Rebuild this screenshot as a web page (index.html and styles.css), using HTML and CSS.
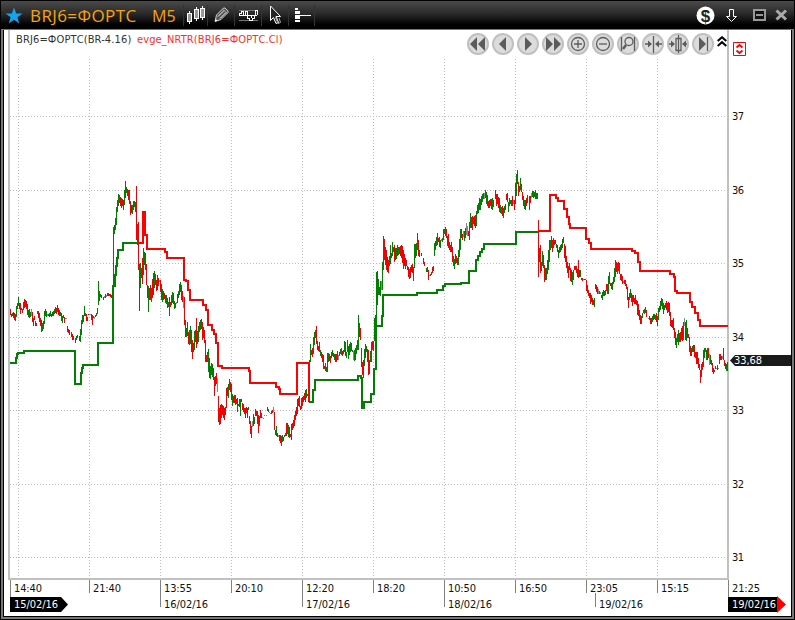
FILE: index.html
```html
<!DOCTYPE html>
<html lang="ru">
<head>
    <meta charset="UTF-8">
    <title>BRJ6=ФОРТС M5</title>
    <link rel="stylesheet" href="styles.css">
</head>
<body>
    <div class="window">
        <div class="titlebar">
            <svg class="star" width="18" height="18" viewBox="0 0 18 18"><path d="M9 0.5L11.2 6.5H17.5L12.4 10.3L14.3 16.5L9 12.8L3.7 16.5L5.6 10.3L0.5 6.5H6.8Z"/></svg>
            <h1 class="symbol">BRJ6=ФОРТС</h1>
            <h1 class="period">M5</h1>
            <div class="tool candles">
                <svg width="18" height="19" viewBox="0 0 18 19" shape-rendering="crispEdges"><path d="M2 5h1v13h-1zM9 1h1v14h-1zM15 0h1v14h-1z" fill="#fff"/><path d="M.5 7.500h4v8h-4zM7.500 3.500h4v9h-4zM13.500 2.500h4v9h-4z" fill="#999" stroke="#fff"/></svg>
            </div>
            <div class="tool pencil">
                <svg width="15" height="16" viewBox="0 0 15 16"><path d="M1 14.500L2.500 8L9.500 1H11L14 4V5.500L7 12.500Z" fill="#555" stroke="#ccc"/><path d="M4 9.500L10.500 3M6 11.500L12.500 5" stroke="#eee"/><path d="M8.500 2L13 6.500" stroke="#999"/><path d="M1 14.500L1.700 12L3.500 13.700Z" fill="#fff"/></svg>
            </div>
            <div class="tool levels">
                <svg width="19" height="13" viewBox="0 0 19 13" shape-rendering="crispEdges"><path d="M0 1.500h19M0 11.500h19" stroke="#777"/><path d="M.5 6V4.500h2V2.500h2V6M6.500 6V2.500h2V6M0 6.500h18M8.500 6.500v3h2v2h3v-2h2v-3M12.500 6v3M16.500 6.500v-5h2v4" stroke="#fff"/></svg>
            </div>
            <div class="tool cursor">
                <svg width="13" height="20" viewBox="0 0 13 20"><path d="M1.500 1V15.500L4.500 12.500L7 18.500L9.500 17.500L7 11.500H11.500Z" fill="#222" stroke="#fff"/><path d="M6.500 12.500L9 18.500L11.500 17.500L10 13" stroke="#aaa"/></svg>
            </div>
            <div class="tool volume">
                <svg width="17" height="16" viewBox="0 0 17 16" shape-rendering="crispEdges"><path d="M0 1h3v2H0zM0 4h5v3H0zM0 8h16v1H0zM0 9h5v3H0zM0 13h5v2H0z" fill="#fff"/></svg>
            </div>
            <div class="window-buttons">
                <svg class="dollar" width="19" height="19" viewBox="0 0 19 19"><circle cx="9.500" cy="9.500" r="9"/><text x="9.500" y="15.500">$</text></svg>
                <svg class="arrow-down" width="11" height="13" viewBox="0 0 11 13"><path d="M3.500.5h4v7h3L5.500 12.500L.5 7.500h3z"/></svg>
                <svg class="max" width="13" height="12" viewBox="0 0 13 12" shape-rendering="crispEdges"><path d="M1 1h11v10H1z"/><path d="M3 6h7"/></svg>
                <svg class="close" width="13" height="12" viewBox="0 0 13 12"><path d="M1.500 1.500L11 10.500M11 1.500L1.500 10.500"/></svg>
            </div>
        </div>
        <div class="content">
            <svg class="chart" width="787" height="586" viewBox="4 30 787 586">
                <g id="grid" class="grid"></g>
                <path class="frame" d="M9 30V579H728V30"/>
                <g id="bars" shape-rendering="crispEdges"></g>
                <g class="trend">
                    <path class="up" d="M10 363H16V358H17V354H18V353H24V351H75V384H81V373H82V368H83V365H98V343H113V286H115V275H116V266H117V258H118V250H123V243H137"/>
                    <path class="down" d="M138 243H143V212H145V235H147V249H165V252H167V258H184V280H186V281H188V290H190V300H203V305H206V310H208V325H212V330H214V334H216V343H218V366H222V368H249V371H250V383H276V387H279V389H280V394H297V363H309V402"/>
                    <path class="up" d="M309 402H313V390H315V380H358V376H361V378H362V408H364V402H371V394H374V369H376V326H382V316H383V295H417V293H437V290H443V286H445V284H461V283H469V271H476V260H478V256H480V252H482V249H484V244H516V232H538"/>
                    <path class="down" d="M538 231H550V195H556V198H558V201H564V209H567V217H569V224H570V228H586V239H589V243H591V249H632V251H635V253H638V262H640V271H670V274H674V277H675V291H677V293H690V302H692V307H695V313H698V320H700V326H728"/>
                </g>
                <g id="axis" class="axis"></g>
                <g class="tags">
                    <path class="tag price" d="M730 360.500L735 355H791V366H735Z"/>
                    <text class="light" x="734" y="364" textLength="28">33,68</text>
                    <path class="tag" d="M10 597H61L68 604.500L61 612H10Z"/>
                    <text class="light" x="14" y="608" textLength="44">15/02/16</text>
                    <path class="tag" d="M728 597H777V612H728Z"/>
                    <path class="arrow" d="M777 596L786 604.500L777 613Z"/>
                    <text class="light" x="732" y="608" textLength="44">19/02/16</text>
                </g>
            </svg>
            <div class="legend">
                <span class="instrument">BRJ6=ФОРТС(BR-4.16)</span>
                <span class="indicator">evge_NRTR(BRJ6=ФОРТС.Cl)</span>
            </div>
            <div class="nav">
                <svg viewBox="0 0 22 22"><circle cx="11" cy="11" r="10"/><path d="M10 4v14L3 11zM18 4v14L11 11z"/></svg>
                <svg viewBox="0 0 22 22"><circle cx="11" cy="11" r="10"/><path d="M14 4v14L7 11z"/></svg>
                <svg viewBox="0 0 22 22"><circle cx="11" cy="11" r="10"/><path d="M8 4v14L15 11z"/></svg>
                <svg viewBox="0 0 22 22"><circle cx="11" cy="11" r="10"/><path d="M4 4v14L11 11zM12 4v14L19 11z"/></svg>
                <svg viewBox="0 0 22 22"><circle cx="11" cy="11" r="10"/><g class="line"><circle cx="11" cy="11" r="6.500"/><path d="M7 11h8M11 7v8"/></g></svg>
                <svg viewBox="0 0 22 22"><circle cx="11" cy="11" r="10"/><g class="line"><circle cx="11" cy="11" r="6.500"/><path d="M7 11h8"/></g></svg>
                <svg viewBox="0 0 22 22"><circle cx="11" cy="11" r="10"/><g class="line"><circle cx="12" cy="8.500" r="4"/><path d="M4.500 4v14M17.500 4v14"/><path class="thick" d="M9 12L6 16"/></g></svg>
                <svg viewBox="0 0 22 22"><circle cx="11" cy="11" r="10"/><path class="line" d="M11.500 3v17M3 11h4M16 11h4"/><path d="M6 7.500v7L10 11zM17 7.500v7L13 11z"/></svg>
                <svg viewBox="0 0 22 22"><circle cx="11" cy="11" r="10"/><path class="line" d="M9 5.500h5v12h-5zM11.500 2v18M2 11h3M17 11h3"/><path d="M4 7.500v7L8 11zM19 7.500v7L15 11z"/></svg>
                <svg viewBox="0 0 22 22"><circle cx="11" cy="11" r="10"/><path d="M7 4v14L14 11z"/><path class="line" d="M15.500 4v14"/></svg>
            </div>
            <svg class="collapse" width="10" height="11" viewBox="0 0 10 11"><path d="M.7 5L5 1.200L9.300 5M.7 10L5 6.200L9.300 10"/></svg>
            <svg class="fit" width="13" height="14" viewBox="0 0 13 14"><path d="M.5.500h12v13H.5z"/><path class="arrows" d="M3.500 5.500L6.500 3L9.500 5.500M3.500 8.500L6.500 11L9.500 8.500"/></svg>
        </div>
    </div>
    <script src="chart.js"></script>
</body>
</html>
```
FILE: styles.css
```css
body{
    margin: 0;
    background: #000;
    font-family: "DejaVu Sans Condensed", "DejaVu Sans", sans-serif;
}
.window{
    width: 795px;
    height: 620px;
    box-sizing: border-box;
    display: flex;
    flex-direction: column;
    background: #000;
    overflow: hidden;
    border: 1px solid #000;
    border-top: 0;
    box-shadow: inset 0 0 0 2px #777;
}
.titlebar{
    height: 30px;
    flex: none;
    box-sizing: border-box;
    display: flex;
    align-items: center;
    padding-left: 4px;
    border-top: 1px solid #000;
    border-bottom: 1px solid #777;
    background: linear-gradient(#4a4a4a, #2a2a2a 45%, #000 85%);
}
.star{
    fill: #14a4ee;
    margin-top: 2px;
}
h1{
    margin: 2px 0 0;
    font-family: "Open Sans", sans-serif;
    font-size: 16px;
    line-height: 20px;
    font-weight: 400;
    color: #f7a30a;
    white-space: nowrap;
}
.symbol{
    width: 108px;
    margin-left: 7px;
    font-size: 17px;
    letter-spacing: .4px;
}
.period{
    width: 22px;
    margin-left: 14px;
    margin-right: 9px;
}
.tool{
    height: 21px;
    box-sizing: border-box;
    display: flex;
    align-items: center;
    justify-content: center;
    border-left: 1px solid #333;
}
.tool svg{
    display: block;
    fill: none;
}
.candles{ width: 24px; }
.pencil{ width: 27px; }
.levels{ width: 27px; }
.cursor{ width: 27px; }
.volume{
    width: 27px;
    padding-left: 3px;
    border-right: 1px solid #333;
}
.window-buttons{
    display: flex;
    align-items: center;
    margin-left: auto;
    margin-right: 6px;
}
.dollar circle{
    fill: #fff;
}
.dollar text{
    font: bold 17px "Liberation Sans", sans-serif;
    text-anchor: middle;
    fill: #222;
}
.arrow-down{
    margin-left: 11px;
    fill: none;
    stroke: #fff;
}
.max{
    margin-left: 16px;
    fill: #111;
    stroke: #999;
    stroke-width: 2;
}
.close{
    margin-left: 9px;
    stroke: #aaa;
    stroke-width: 3;
}
.content{
    position: relative;
    width: 787px;
    height: 586px;
    margin-left: 3px;
    background: #fff;
    outline: 1px solid #000;
    clip-path: inset(0 -1px -1px -1px);
}
.chart{
    display: block;
}
.grid{
    stroke: #bebebe;
    stroke-dasharray: 1 2;
    shape-rendering: crispEdges;
}
.frame{
    fill: none;
    stroke: #c0c0c0;
    stroke-width: 2;
}
.trend{
    fill: none;
    stroke-width: 2;
    shape-rendering: crispEdges;
}
.up{ stroke: #008000; }
.down{ stroke: #f00; }
.bar-g{ fill: #008000; }
.bar-r{ fill: #f00000; }
.bar-x{ fill: #888; }
.axis path{
    stroke: #808080;
    shape-rendering: crispEdges;
}
.chart text{
    font-size: 11px;
    fill: #111;
}
.chart .light{
    fill: #fff;
}
.tag{ fill: #000; }
.tag.price{ fill: #1a1a1a; }
.arrow{ fill: #f00; }
.legend{
    position: absolute;
    left: 12px;
    top: 2px;
    display: flex;
    gap: 6px;
    font-size: 11px;
    line-height: 15px;
    letter-spacing: .13px;
    white-space: nowrap;
    color: #333;
}
.instrument{
    width: 115px;
}
.indicator{
    color: #ff2a2a;
}
.nav{
    position: absolute;
    left: 463px;
    top: 3px;
    display: flex;
    gap: 3px;
}
.nav svg{
    width: 22px;
    height: 22px;
    fill: #5c5c5c;
}
.nav svg > circle{
    fill: #dcdcdc;
    stroke: #c0c0c0;
    stroke-width: 2;
}
.nav .line{
    fill: none;
    stroke: #5c5c5c;
    stroke-width: 1.3;
}
.nav .thick{
    stroke-width: 2.5;
}
.collapse{
    position: absolute;
    left: 713px;
    top: 6px;
    fill: none;
    stroke: #000;
    stroke-width: 2;
}
.fit{
    position: absolute;
    left: 729px;
    top: 12px;
    fill: #fff;
    stroke: #f00;
}
.fit .arrows{
    fill: none;
    stroke-width: 2;
}
```
FILE: chart.js
```js
// one bar per pixel, each row starts at its key; g/r/x = up/down/flat, "." = no bar
const bars = {
    10: "r309-315 r314-317 g313-316 r312-318 r313-320 g314-321 g306-317 g303-309 g297-306 r303-309",
    20: "r303-314 r308-310 r309-313 g302-310 r299-308 g300-307 r301-309 r304-315 g310-317 r309-318",
    30: "g312-317 x309-316 r312-322 r318-326 r316-320 r321-326 r323-326 g311-314 r311-318 r313-322",
    40: "r318-326 r320-332 g323-331 g321-329 g311-324 r309-316 g311-317 x314-316 g314-316 r313-317",
    50: "g311-316 r314-317 g312-316 r311-316 g309-314 r307-313 r308-314 g305-312 r308-315 r310-316",
    60: "g312-316 g313-321 g316-323 r315-318 r317-323 x318-319 x318-319 r326-332 r329-333 r330-335",
    70: ". r332-337 r334-340 r336-340 . r338-343 g336-340 g335-338 . g336-341",
    80: "g329-342 g320-335 g315-324 g315-322 g306-316 r313-316 r314-321 r317-321 r314-315 x314-315",
    90: "x314-315 r314-320 r315-325 r316-318 x317-319 g315-317 g313-316 g308-314 g281-305 g291-301",
    100: "g294-297 r295-298 . r297-300 x296-298 g294-298 x295-297 g293-296 r293-296 g294-296",
    110: "r294-297 r295-298 . g227-286 g225-234 g218-230 g207-225 g200-212 g194-206 g195-203",
    120: "r197-206 g198-208 r199-206 r200-210 g190-205 r181-198 g187-193 r189-196 r190-200 g190-204",
    130: "r201-215 r205-213 g205-214 g201-210 g201-207 r202-212 r186-240 g224-245 r222-270 r264-311",
    140: "g263-288 g268-278 r258-284 g248-275 g252-265 r253-270 r264-285 r285-298 g286-312 g288-300",
    150: "r285-300 g288-302 r279-298 r273-295 g271-288 g274-285 r280-291 r275-290 r278-286 x280-282",
    160: "r280-292 r284-300 g289-302 r291-300 r293-299 r295-303 g295-304 r298-308 g302-307 g297-316",
    170: "r302-307 g295-305 g292-303 r293-304 g301-309 g303-308 x302-304 r294-303 g291-298 r284-295",
    180: "g282-292 r285-300 r291-302 x296-308 r297-325 r320-337 g328-337 r322-336 r332-344 g330-345",
    190: "g326-344 r330-352 r340-359 g343-352 g331-350 r330-342 r318-348 r331-344 g326-342 g322-332",
    200: "g320-330 r319-329 r322-340 r327-338 r330-343 r340-362 r355-362 g352-362 g349-372 r358-378",
    210: "g366-379 g363-375 g364-377 r368-380 r377-396 r376-386 r373-384 x378-392 r396-422 g408-425",
    220: "r405-424 g404-418 r405-415 r406-418 r408-420 g407-415 r388-408 g387-396 g384-398 r379-390",
    230: "r382-392 r384-400 g394-406 g396-403 r395-403 g395-405 r399-404 r398-412 g404-406 r399-407",
    240: "g399-416 r399-402 r403-410 r404-412 r408-414 r408-418 r407-413 r408-418 g407-410 r416-424",
    250: "r421-434 g426-438 x421-427 r414-426 g417-424 r409-416 r411-416 r411-424 r415-433 g416-426",
    260: "r410-418 g413-418 x417-418 x418-419 x415-416 . x415-416 g407-411 g409-412 x412-413",
    270: "x413-414 r411-414 r410-413 x407-412 r412-430 r430-435 g426-436 r433-437 x435-437 r435-441",
    280: "r435-443 g436-446 g435-442 r437-441 g435-437 g433-436 r423-436 r423-434 g425-437 r427-438",
    290: "r434-437 r424-440 r423-430 r420-428 r415-426 r411-420 r407-416 r399-414 r398-406 g396-407",
    300: "r406-410 r398-409 r397-406 r396-402 r393-400 r390-402 g389-398 r394-396 r386-391 g360-385",
    310: "g344-362 r350-355 r348-357 g337-354 g332-345 g330-338 r326-344 r341-350 r346-351 r342-352",
    320: "g350-356 r352-358 r354-362 r355-369 r366-369 g363-371 g367-372 g353-372 g353-362 r354-361",
    330: "r356-363 r352-358 g350-356 r353-357 g354-360 r354-362 r354-362 g351-360 x355-360 r352-356",
    340: "g349-354 g348-355 r351-356 r350-354 g341-352 r342-356 g352-358 r340-352 g346-359 g344-355",
    350: "g342-352 r343-351 g350-352 x351-360 g350-361 r348-360 g345-354 g340-350 g315-350 r323-337",
    360: "r328-340 r348-367 r362-375 r360-378 g349-366 r344-358 g346-352 r349-362 r350-375 r360-374",
    370: "g351-362 g342-362 r341-350 g341-351 g318-341 r315-328 g272-326 r271-305 g279-295 r287-295",
    380: "g281-296 x281-290 g262-290 g236-270 r239-260 r247-265 r250-270 r257-272 r260-273 g256-266",
    390: "g245-264 r253-258 g242-256 g247-252 r245-262 r248-260 g248-259 r245-256 g247-255 g247-254",
    400: "r246-256 r245-258 r246-263 r250-269 r254-266 r258-269 r260-266 r266-270 r267-277 g269-279",
    410: "r267-278 r265-272 r264-273 g267-281 g244-268 g244-258 g243-256 g233-250 r240-256 r250-257",
    420: ". r253-256 . r258-264 r262-266 . g268-272 r267-272 r270-280 x275-276",
    430: "g274-276 g272-275 r267-273 r266-271 g243-256 g241-250 g237-246 g233-245 r238-242 g237-247",
    440: "g240-248 x239-241 g238-242 g229-240 g229-234 g227-236 r229-238 r236-246 r234-248 r242-250",
    450: "r245-252 r242-252 r247-262 g256-266 g259-269 r254-264 r256-263 r258-265 g250-265 g239-257",
    460: "g229-250 r229-238 r234-240 x231-237 g231-241 r228-238 x223-235 x226-236 r231-236 g222-240",
    470: "g213-228 r217-228 r216-230 r217-224 r216-226 g215-228 g211-226 g205-214 g203-213 r198-210",
    480: "g199-210 g196-205 g194-202 g193-199 x193-199 g190-198 g192-204 r195-206 r201-208 r200-208",
    490: "r199-206 r199-209 g198-210 r200-207 . r190-199 r194-206 r194-204 r197-208 r198-212",
    500: "g205-213 g207-214 r206-216 g208-218 g206-213 r204-210 r194-200 r193-202 g202-212 g198-206",
    510: "g200-204 g200-206 r196-206 x200-204 r200-210 g183-204 g174-196 r170-184 r182-196 g186-192",
    520: "g178-190 r184-192 r192-200 r196-206 g200-209 r200-210 r198-206 r195-203 . r196-210",
    530: "r196-203 x193-198 g191-197 g191-198 g192-197 g190-199 g193-199 g193-199 r220-277 g248-262",
    540: "r245-273 r262-271 g251-266 r255-268 r265-282 r268-280 g268-280 r260-274 g250-270 g240-262",
    550: "g240-250 g236-248 r240-252 g238-248 r240-245 r240-244 g244-248 r245-252 g250-258 r247-253",
    560: "g245-252 r244-250 g239-248 g237-243 r244-258 r246-262 r256-268 r262-273 r266-278 r263-270",
    570: "r268-281 r270-282 g272-285 g270-280 r266-270 r266-270 r266-273 r269-277 r260-278 r270-277",
    580: "g270-277 r278-280 r278-281 x279-280 r279-280 r279-280 r280-291 r285-293 r290-296 r293-298",
    590: "r293-304 r295-302 r298-305 r300-305 g298-307 r284-289 r285-292 r287-294 x289-294 g291-294",
    600: "x292-294 g295-298 g292-300 r290-296 g291-296 g290-295 r284-291 g284-294 g276-294 g272-284",
    610: "r283-286 r283-289 g282-290 g277-284 g268-282 g260-277 r262-272 g263-274 r262-271 r263-274",
    620: "r274-280 g274-281 r276-284 x281-283 r280-284 g280-286 r284-289 r287-300 r297-308 g293-300",
    630: "g289-298 r293-302 r295-306 r295-302 r298-304 g295-304 r300-305 r301-315 r304-316 r310-320",
    640: "r315-324 g316-324 g313-318 g310-313 g309-314 g307-313 r310-317 . x318-319 r316-320",
    650: "r318-324 g318-324 g316-322 r314-320 g314-319 g315-320 r313-322 g316-326 g308-320 r306-312",
    660: "g301-310 r298-306 g299-309 r303-314 g305-310 r303-308 r301-310 r303-313 r302-312 r303-316",
    670: "r312-326 r320-327 r320-328 r318-330 r328-338 r332-345 g338-348 r334-342 g330-345 r333-342",
    680: "r332-342 g328-340 r326-341 g322-340 x318-326 r322-340 g320-341 r328-338 r334-338 r337-352",
    690: "r346-356 r348-356 g346-352 r345-352 r345-357 g352-358 r352-364 r352-364 r358-368 r364-370",
    700: "r370-383 g364-377 r362-370 g350-367 g348-358 r348-352 g350-360 r348-360 r348-358 x354-365",
    710: "g355-364 r360-365 r363-372 r368-374 r370-372 g366-369 x368-369 g365-370 x368-369 g354-364",
    720: "r354-360 r356-360 x356-359 r348-360 r360-366 r363-369 g364-371 r362-371"
};

let out = "";
for (const start in bars) {
    bars[start].split(" ").forEach((bar, i) => {
        if (bar == ".") return;
        const [top, bottom] = bar.slice(1).split("-");
        out += `<rect class="bar-${bar[0]}" x="${+start + i}" y="${top}" width="1" height="${bottom - top}"/>`;
    });
}
document.getElementById("bars").innerHTML = out;

const prices = [[37, 116], [36, 190], [35, 263], [34, 337], [33, 410], [32, 484], [31, 557]];
const times = [[18, "14:40"], [89, "21:40"], [160, "13:55"], [231, "20:10"], [302, "12:20"], [373, "18:20"],
    [444, "10:50"], [515, "16:50"], [586, "23:05"], [657, "15:15"], [728, "21:25"]];
const dates = [[160, "16/02/16"], [302, "17/02/16"], [444, "18/02/16"], [595, "19/02/16"]];

let grid = "";
let axis = "";
for (const [price, y] of prices) {
    grid += `<path d="M10 ${y}.5H727"/>`;
    axis += `<text x="732" y="${y + 4}" textLength="12">${price}</text>`;
}
for (const [x, time] of times) {
    const left = x == 18 ? 10 : x;
    if (x < 728) grid += `<path d="M${x}.5 59V578"/>`;
    axis += `<path d="M${left}.5 580V${x == 18 || x == 728 ? 597 : 593}"/>`;
    axis += `<text x="${left + 4}" y="592" textLength="28">${time}</text>`;
}
for (const [x, date] of dates) {
    axis += `<path d="M${x}.5 ${x == 595 ? 593 : 580}V607"/>`;
    axis += `<text x="${x + 4}" y="608" textLength="44">${date}</text>`;
}
document.getElementById("grid").innerHTML = grid;
document.getElementById("axis").innerHTML = axis;
```
